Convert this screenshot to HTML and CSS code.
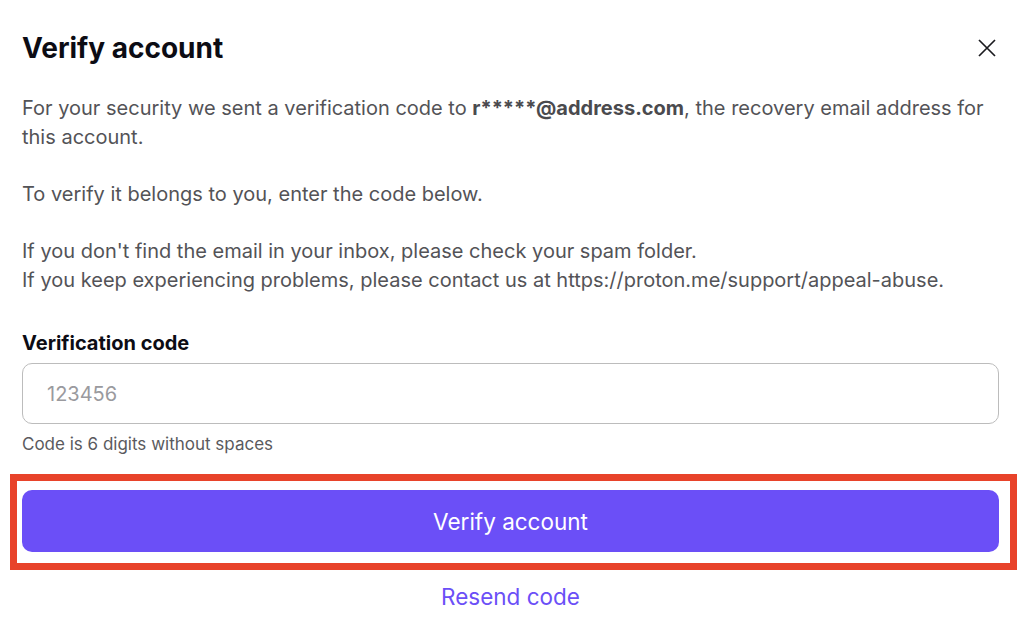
FILE: index.html
```html
<!DOCTYPE html>
<html lang="en">
<head>
<meta charset="utf-8">
<title>Verify account</title>
<link rel="stylesheet" href="styles.css">
</head>
<body>
<div class="modal">
  <header class="modal-header">
    <h1 class="title">Verify account</h1>
    <button class="close" aria-label="Close">
      <svg width="18" height="18" viewBox="0 0 18 18"><path d="M1 1L17 17M17 1L1 17" stroke="#1b1b1f" stroke-width="1.7" fill="none"/></svg>
    </button>
  </header>
  <div class="content">
    <p class="para">For your security we sent a verification code to <strong>r*****@address.com</strong>, the recovery email address for this account.</p>
    <p class="para">To verify it belongs to you, enter the code below.</p>
    <p class="para">If you don't find the email in your inbox, please check your spam folder.<br>If you keep experiencing problems, please contact us at https://proton.me/support/appeal-abuse.</p>
    <label class="label" for="code">Verification code</label>
    <input class="input" id="code" type="text" placeholder="123456">
    <div class="hint">Code is 6 digits without spaces</div>
    <div class="highlight">
      <button class="primary">Verify account</button>
    </div>
    <div class="resend-row"><button class="link">Resend code</button></div>
  </div>
</div>
</body>
</html>
```
FILE: styles.css
```css
* { box-sizing: border-box; }
html, body { margin: 0; padding: 0; background: #fff; }
body { font-family: Inter, "Noto Sans", sans-serif; color: #535357; }
.modal { padding: 0 25px 0 22px; }
.modal-header { display: flex; align-items: center; justify-content: space-between; padding-top: 31px; }
.title { margin: 0; font-size: 28px; line-height: 34px; font-weight: 700; color: #0c0c14; }
.close { border: 0; background: none; padding: 0; width: 18px; height: 18px; margin-right: 3px; display: flex; }
.content { padding-top: 29px; }
.para { margin: 0 0 28.6px; font-size: 20px; line-height: 28.6px; }
.para strong { font-weight: 700; color: #4a4a4e; }
.para:last-of-type { margin-bottom: 0; }
.label { display: block; margin-top: 35px; font-size: 20px; line-height: 28px; font-weight: 700; color: #0c0c14; }
.input { display: block; width: 100%; height: 61px; margin-top: 6px; border: 1px solid #bcbcbc; border-radius: 10px; padding: 0 24px; font-family: inherit; font-size: 20px; color: #0c0c14; outline: none; }
.input::placeholder { color: #9a9a9e; }
.hint { margin-top: 10px; font-size: 17px; line-height: 20px; color: #5a5a5e; }
.highlight { margin: 20px -18px 0 -12px; border: 7px solid #e8432a; padding: 9px 11px 11px 5px; }
.primary { display: block; width: 100%; height: 62px; border: 0; border-radius: 10px; background: #6b4ff7; color: #fff; font-family: inherit; font-size: 22.5px; cursor: pointer; }
.resend-row { display: flex; justify-content: center; margin-top: 13px; }
.link { border: 0; background: none; padding: 0; font-family: inherit; font-size: 22.5px; line-height: 28px; color: #6b4ff7; cursor: pointer; }
```
